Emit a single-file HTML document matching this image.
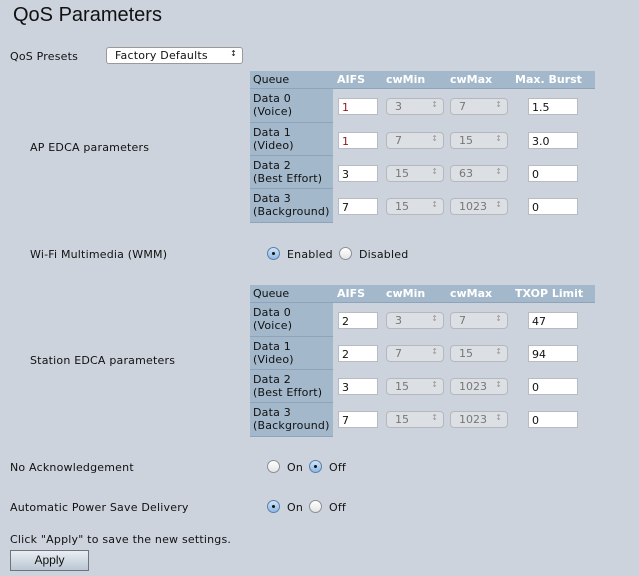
<!DOCTYPE html>
<html><head><style>
body{margin:0;width:639px;height:576px;background:#ccd3dc;font-family:"DejaVu Sans","Liberation Sans",sans-serif;font-size:11px;letter-spacing:0.2px;color:#111;position:relative;overflow:hidden}
.a{position:absolute;white-space:nowrap}
h1{position:absolute;left:13px;top:4px;margin:0;font:20px "Liberation Sans",Arial,sans-serif;color:#111;letter-spacing:0}
.tb{position:absolute;left:250px;width:345px;background:transparent}
.hd{position:absolute;left:0;top:0;width:345px;height:17px;background:#a3b8cb;border-bottom:1px solid #8fa4b8}
.hd span{position:absolute;top:2px;color:#fff;font-weight:bold;letter-spacing:0}
.hd span.q{color:#111;font-weight:normal;left:3px}
.qc{position:absolute;left:0;width:83px;height:32px;background:#a3b8cb;border-bottom:1px solid #8fa4b8;line-height:13px;padding:3px 0 0 3px;box-sizing:border-box}
.in{position:absolute;height:17px;background:#fff;border:1px solid #b8bcc2;box-sizing:border-box;padding:2px 0 0 3px;font-size:11px;letter-spacing:0}
.sel{position:absolute;height:17px;width:58px;background:#dcdfe3;border:1px solid #b5b9be;border-radius:4px;box-sizing:border-box;padding:1px 0 0 8px;color:#777;letter-spacing:0}
.sel:after{content:"\2195";position:absolute;right:5px;top:1px;font-size:8px;color:#999}
.rd{position:absolute;width:13px;height:13px;border-radius:50%;border:1px solid #8a8f95;background:linear-gradient(#fff,#e4e4e4);box-sizing:border-box}
.rd.on{background:linear-gradient(#cfe3f7,#8fb9e6);border-color:#5b7fa8}
.rd.on:after{content:"";position:absolute;left:4px;top:4px;width:3px;height:3px;border-radius:50%;background:#111}
</style></head><body>
<h1>QoS Parameters</h1>
<div class="a" style="left:10px;top:50px">QoS Presets</div>
<div class="a" style="left:106px;top:47px;width:137px;height:17px;background:#fff;border:1px solid #999;border-radius:3px;box-sizing:border-box;padding:1px 0 0 8px">Factory Defaults<span style="position:absolute;right:5px;top:1px;font-size:8px">&#8597;</span></div>
<div class="a" style="left:30px;top:141px">AP EDCA parameters</div>

<div class="tb" style="top:71px;height:152px">
<div class="hd"><span class="q">Queue</span><span style="left:87px">AIFS</span><span style="left:136px">cwMin</span><span style="left:200px">cwMax</span><span style="left:265px">Max. Burst</span></div>
<div class="qc" style="top:18px;height:34px">Data 0<br>(Voice)</div>
<div class="qc" style="top:52px;height:33px">Data 1<br>(Video)</div>
<div class="qc" style="top:85px;height:33px">Data 2<br>(Best Effort)</div>
<div class="qc" style="top:118px;height:34px">Data 3<br>(Background)</div>
<div class="in" style="left:88px;top:27px;width:40px;color:#8b1a1a">1</div>
<div class="in" style="left:88px;top:61px;width:40px;color:#8b1a1a">1</div>
<div class="in" style="left:88px;top:94px;width:40px">3</div>
<div class="in" style="left:88px;top:127px;width:40px">7</div>
<div class="sel" style="left:136px;top:27px">3</div><div class="sel" style="left:200px;top:27px">7</div>
<div class="sel" style="left:136px;top:61px">7</div><div class="sel" style="left:200px;top:61px">15</div>
<div class="sel" style="left:136px;top:94px">15</div><div class="sel" style="left:200px;top:94px">63</div>
<div class="sel" style="left:136px;top:127px">15</div><div class="sel" style="left:200px;top:127px">1023</div>
<div class="in" style="left:278px;top:27px;width:50px">1.5</div>
<div class="in" style="left:278px;top:61px;width:50px">3.0</div>
<div class="in" style="left:278px;top:94px;width:50px">0</div>
<div class="in" style="left:278px;top:127px;width:50px">0</div>
</div>

<div class="a" style="left:30px;top:248px">Wi-Fi Multimedia (WMM)</div>
<div class="rd on" style="left:267px;top:247px"></div><div class="a" style="left:287px;top:248px">Enabled</div>
<div class="rd" style="left:339px;top:247px"></div><div class="a" style="left:359px;top:248px">Disabled</div>

<div class="a" style="left:30px;top:354px">Station EDCA parameters</div>
<div class="tb" style="top:285px;height:152px">
<div class="hd"><span class="q">Queue</span><span style="left:87px">AIFS</span><span style="left:136px">cwMin</span><span style="left:200px">cwMax</span><span style="left:265px">TXOP Limit</span></div>
<div class="qc" style="top:18px;height:34px">Data 0<br>(Voice)</div>
<div class="qc" style="top:52px;height:33px">Data 1<br>(Video)</div>
<div class="qc" style="top:85px;height:33px">Data 2<br>(Best Effort)</div>
<div class="qc" style="top:118px;height:34px">Data 3<br>(Background)</div>
<div class="in" style="left:88px;top:27px;width:40px">2</div>
<div class="in" style="left:88px;top:60px;width:40px">2</div>
<div class="in" style="left:88px;top:93px;width:40px">3</div>
<div class="in" style="left:88px;top:126px;width:40px">7</div>
<div class="sel" style="left:136px;top:27px">3</div><div class="sel" style="left:200px;top:27px">7</div>
<div class="sel" style="left:136px;top:60px">7</div><div class="sel" style="left:200px;top:60px">15</div>
<div class="sel" style="left:136px;top:93px">15</div><div class="sel" style="left:200px;top:93px">1023</div>
<div class="sel" style="left:136px;top:126px">15</div><div class="sel" style="left:200px;top:126px">1023</div>
<div class="in" style="left:278px;top:27px;width:50px">47</div>
<div class="in" style="left:278px;top:60px;width:50px">94</div>
<div class="in" style="left:278px;top:93px;width:50px">0</div>
<div class="in" style="left:278px;top:126px;width:50px">0</div>
</div>

<div class="a" style="left:10px;top:461px">No Acknowledgement</div>
<div class="rd" style="left:267px;top:460px"></div><div class="a" style="left:287px;top:461px">On</div>
<div class="rd on" style="left:309px;top:460px"></div><div class="a" style="left:329px;top:461px">Off</div>

<div class="a" style="left:10px;top:501px">Automatic Power Save Delivery</div>
<div class="rd on" style="left:267px;top:500px"></div><div class="a" style="left:287px;top:501px">On</div>
<div class="rd" style="left:309px;top:500px"></div><div class="a" style="left:329px;top:501px">Off</div>

<div class="a" style="left:10px;top:533px">Click "Apply" to save the new settings.</div>
<div class="a" style="left:10px;top:550px;width:79px;height:21px;box-sizing:border-box;border:1px solid #6d747c;background:linear-gradient(#e9eef3,#b9c6d3);font:12px 'Liberation Sans',Arial,sans-serif;text-align:center;line-height:19px;letter-spacing:0">Apply</div>
</body></html>
